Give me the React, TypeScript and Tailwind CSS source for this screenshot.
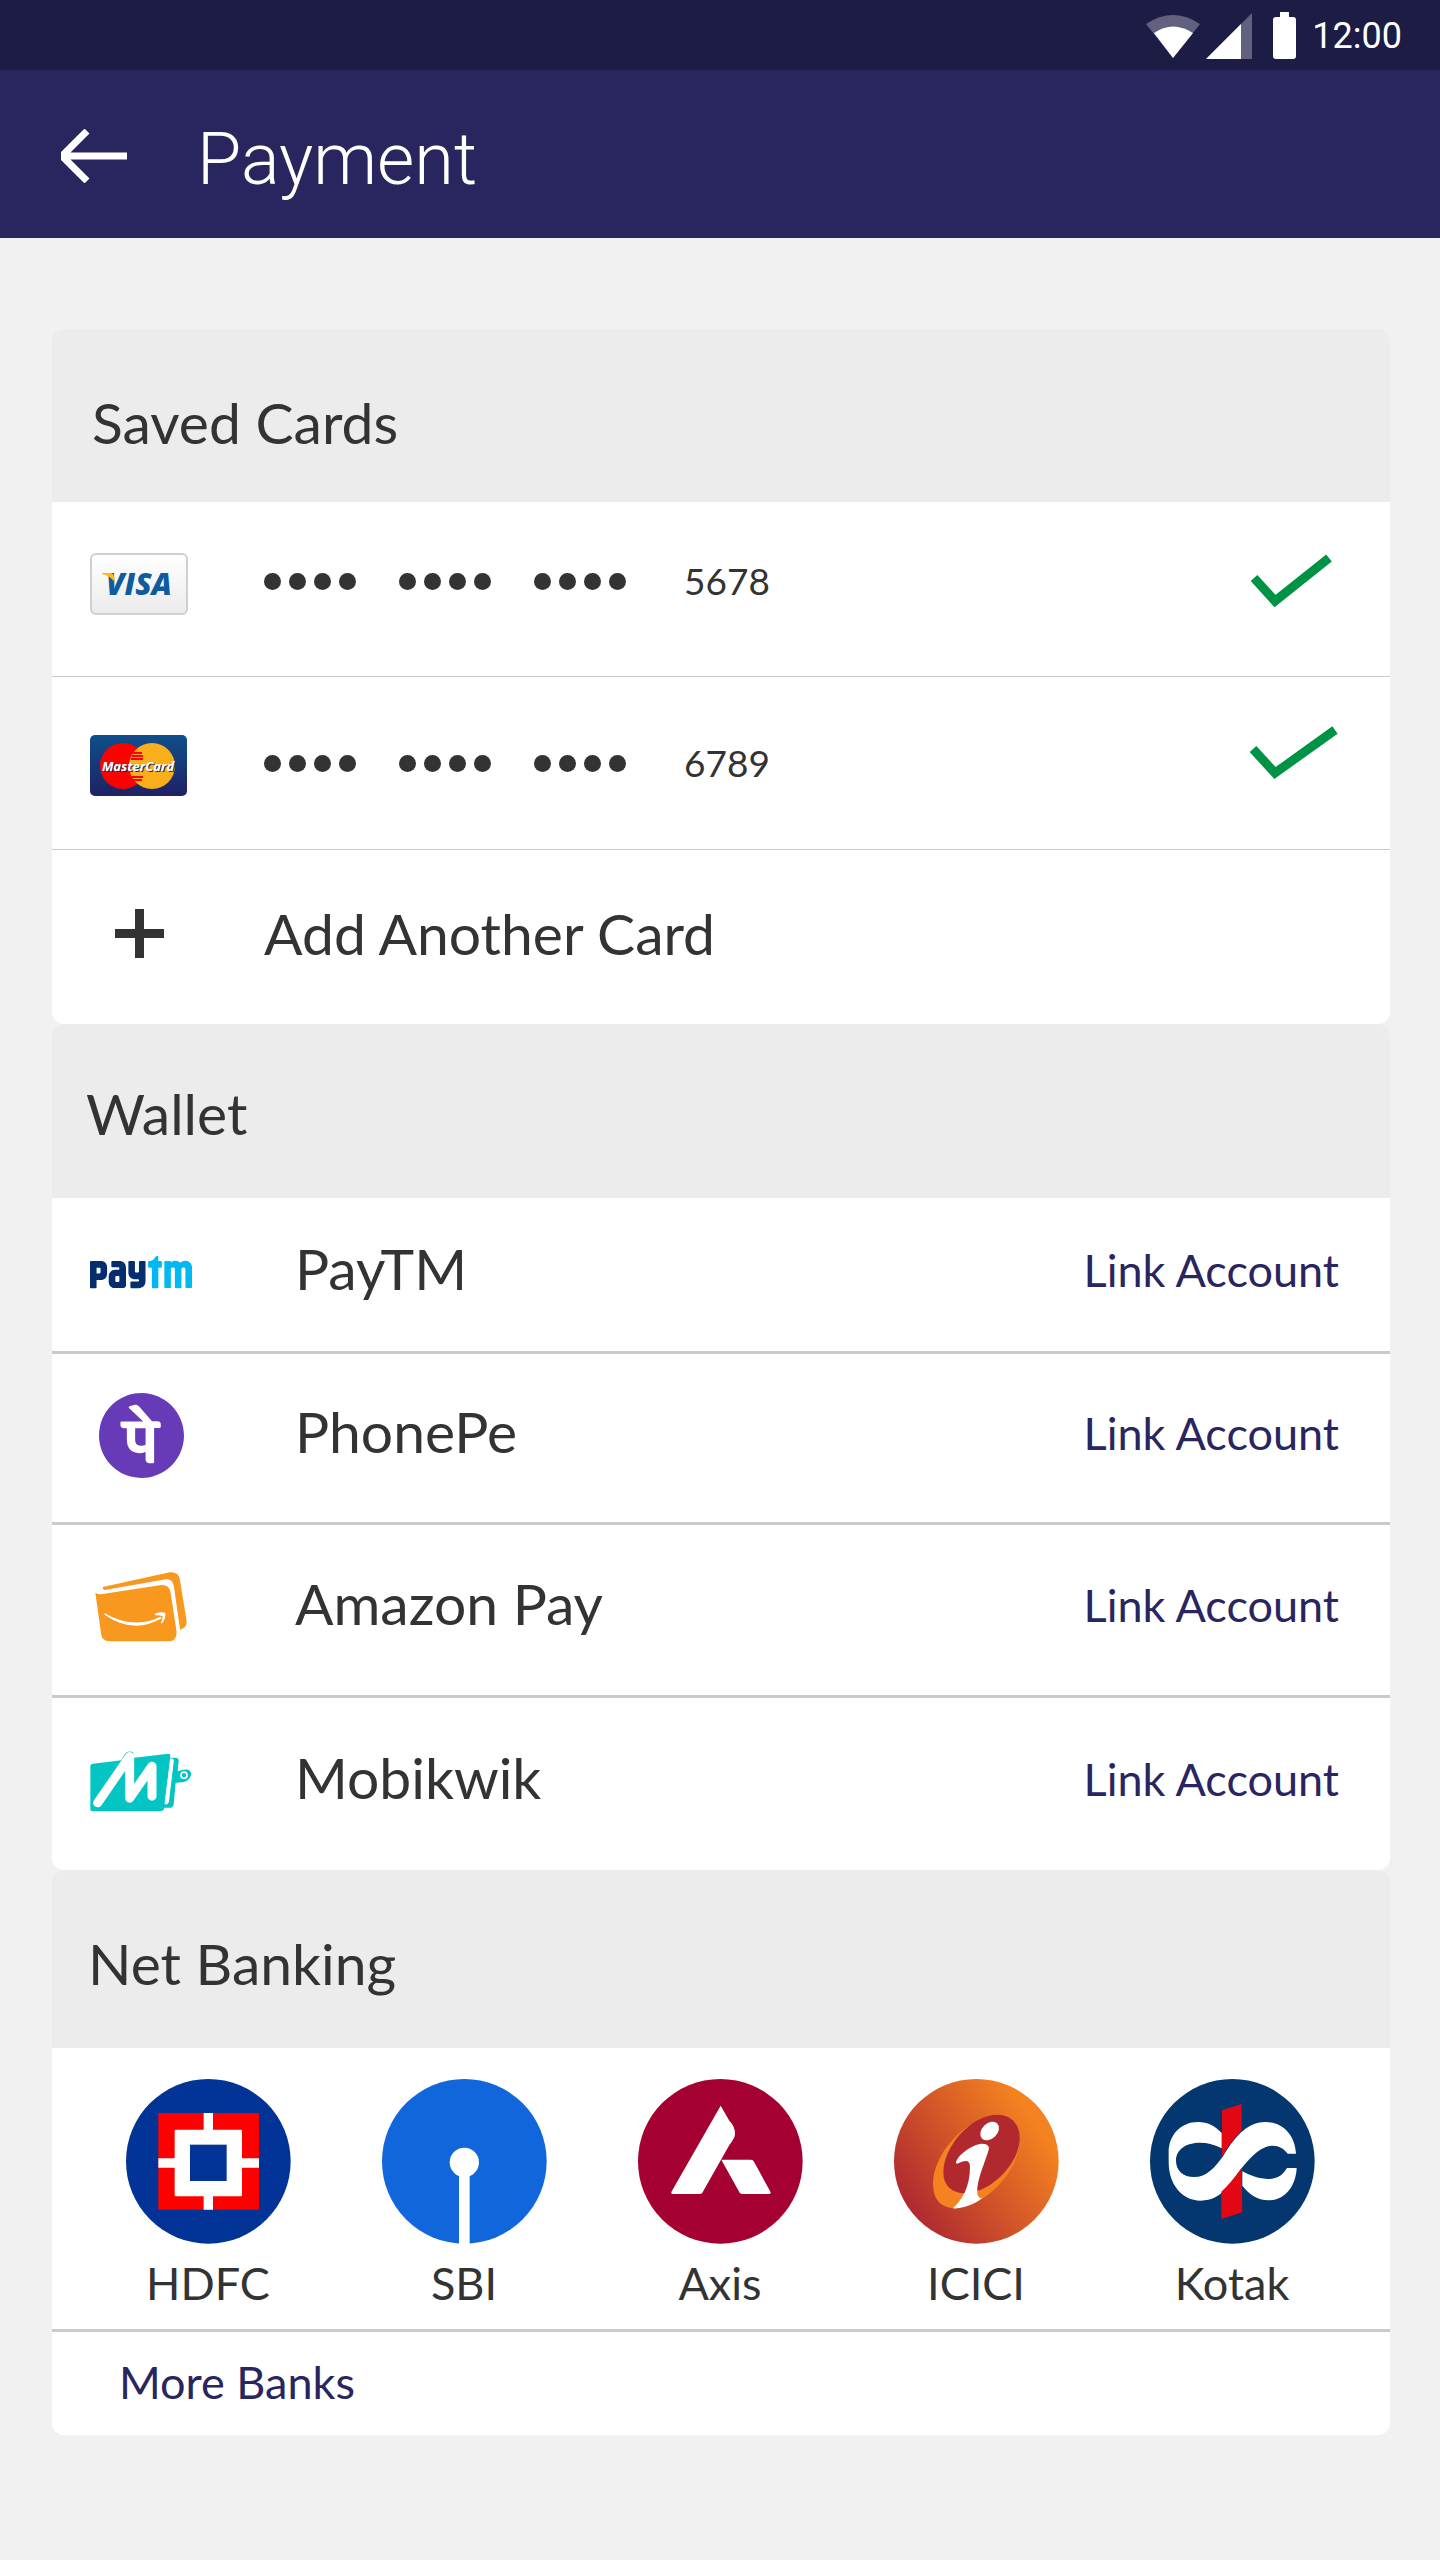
import type { ReactNode } from "react";
import { SiPaytm, SiPhonepe } from "react-icons/si";

/* ---------- Status bar icons ---------- */

function StatusIcons() {
  return (
    <svg width="150" height="48" viewBox="0 0 150 48" role="img" aria-label="Wi-Fi, signal and battery">
      <path d="M27 46 L0 12 Q27 -6 54 12Z" fill="#61607F" />
      <path d="M27 46 L8 21 Q27 8 47 21Z" fill="#fff" />
      <path d="M106 1 V47 H60Z" fill="#61607F" />
      <path d="M95 12 V47 H60Z" fill="#fff" />
      <path d="M134 0 h9 v5 h4 q3 0 3 3 v36 q0 3 -3 3 h-17 q-3 0 -3 -3 v-36 q0 -3 3 -3 h4Z" fill="#fff" />
    </svg>
  );
}

/* ---------- Card logos ---------- */

function VisaLogo() {
  return (
    <svg width="98" height="62" viewBox="0 0 98 62" role="img" aria-label="Visa">
      <defs>
        <linearGradient id="visaBg" x1="0" y1="0" x2="0" y2="1">
          <stop offset="0" stopColor="#ffffff" />
          <stop offset="1" stopColor="#ebebeb" />
        </linearGradient>
      </defs>
      <rect x="1" y="1" width="96" height="60" rx="5" fill="url(#visaBg)" stroke="#cfcfcf" strokeWidth="2" />
      <text
        x="49"
        y="42"
        textAnchor="middle"
        fontFamily="Open Sans, sans-serif"
        fontWeight="800"
        fontStyle="italic"
        fontSize="30"
        fill="#0E5C9F"
      >
        VISA
      </text>
      <path d="M12 20 H21 Q25 21 25 30 Q21 23 12 21Z" fill="#FDBB0A" />
    </svg>
  );
}

function MasterCardLogo() {
  return (
    <svg width="98" height="62" viewBox="0 0 98 62" role="img" aria-label="MasterCard">
      <defs>
        <linearGradient id="mcBg" x1="0" y1="0" x2="0" y2="1">
          <stop offset="0" stopColor="#0F4F8B" />
          <stop offset="1" stopColor="#1E2163" />
        </linearGradient>
      </defs>
      <rect width="97" height="61" rx="5" fill="url(#mcBg)" />
      <circle cx="33" cy="31" r="23" fill="#FF0000" />
      <circle cx="62" cy="31" r="23" fill="#F9AE1B" />
      <path d="M43 18h9M42 21h11M41 24h12M42 42h11M43 45h9" stroke="#FF0000" strokeWidth="2" />
      <g fontFamily="Open Sans, sans-serif" fontWeight="700" fontStyle="italic" fontSize="13" textAnchor="middle">
        <text x="49" y="37" fill="#1D2C66" aria-hidden="true">
          MasterCard
        </text>
        <text x="48" y="36" fill="#fff">
          MasterCard
        </text>
      </g>
    </svg>
  );
}

/* ---------- Wallet logos ---------- */

function PaytmLogo() {
  return (
    <>
      <svg width="0" height="0" className="absolute" aria-hidden="true">
        <defs>
          <linearGradient id="paytmFill" gradientUnits="userSpaceOnUse" x1="0" y1="0" x2="24" y2="0">
            <stop offset="0.555" stopColor="#042E6F" />
            <stop offset="0.555" stopColor="#00B9F1" />
          </linearGradient>
        </defs>
      </svg>
      <SiPaytm size={102} fill="url(#paytmFill)" aria-hidden="true" />
    </>
  );
}

function AmazonPayLogo() {
  return (
    <svg width="92" height="70" viewBox="145 572 240 210" preserveAspectRatio="none" aria-hidden="true">
      <g fill="#F8981F">
        <path d="M165 617 L340 573 Q362 571 366 592 L384 720 Q385 738 367 745 L351 616 Q348 592 330 594 L170 626 Q165 624 165 617Z" />
        <path d="M146 635 Q155 640 165 638 L318 611 Q338 610 342 632 L358 752 Q358 780 338 780 H183 Q163 780 161 758Z" />
      </g>
      <g fill="#fff">
        <path d="M170 696 Q245 746 316 706 L319 711 Q245 760 170 700Z" />
        <path d="M301 697 Q320 690 328 695 Q332 708 319 727 L317 724 Q322 710 321 704 Q312 701 302 702Z" />
      </g>
    </svg>
  );
}

function MobikwikLogo() {
  return (
    <svg width="102" height="61" viewBox="61 88 306 182" aria-hidden="true">
      <g fill="#04C4C4">
        <path d="M62 135 Q62 127 70 126 L155 115 L167 95 Q174 86 190 91 L194 108 L296 96 Q303 96 302 104 L284 256 Q283 268 272 268 H68 Q62 268 62 262Z" />
        <path d="M303 108 H318 Q327 108 327 117 L324 148 Q340 142 352 143 Q366 146 364 160 Q360 176 340 181 L318 183 L312 247 Q310 258 300 258 H276 L286 246 Q297 247 298 238 L312 120 Q312 112 303 112Z" />
      </g>
      <path d="M84 243 L180 104 V229 L247 133 V223" fill="none" stroke="#fff" strokeWidth="27" strokeLinecap="round" strokeLinejoin="round" />
      <path d="M307 115 L290 243" stroke="#fff" strokeWidth="10" strokeLinecap="round" />
      <circle cx="343" cy="160" r="9" fill="none" stroke="#fff" strokeWidth="5" />
    </svg>
  );
}

/* ---------- Bank logos ---------- */

function HdfcLogo() {
  return (
    <svg className="size-[165px]" viewBox="165 117 495 495" aria-hidden="true">
      <circle cx="412" cy="364" r="247" fill="#023397" />
      <rect x="262" y="219" width="302" height="290" fill="#f00" />
      <path d="M398 219h28v290h-28z M262 355h302v28h-302z" fill="#fff" />
      <rect x="311" y="269" width="202" height="200" rx="3" fill="#fff" />
      <rect x="357" y="314" width="110" height="109" fill="#023397" />
    </svg>
  );
}

function SbiLogo() {
  return (
    <svg className="size-[165px]" viewBox="934 115 495 495" aria-hidden="true">
      <circle cx="1181" cy="362" r="247" fill="#1166DB" />
      <circle cx="1181" cy="365" r="44" fill="#fff" />
      <path d="M1165 370h32v240h-32z" fill="#fff" />
    </svg>
  );
}

function AxisLogo() {
  return (
    <svg className="size-[165px]" viewBox="113 119 495 495" aria-hidden="true">
      <circle cx="360" cy="366" r="247" fill="#A40132" />
      <g fill="#fff">
        <path d="M361 199 L387 244 Q405 262 404 285 Q403 298 387 317 L306 460 Q304 464 298 464 H216 Q211 462 213 458Z" />
        <path d="M363 361 H452 Q458 361 461 367 L511 459 Q512 464 507 464 H425 Q420 463 418 460Z" />
      </g>
    </svg>
  );
}

function IciciLogo() {
  return (
    <svg className="size-[165px]" viewBox="882 115 495 495" aria-hidden="true">
      <defs>
        <linearGradient id="iciciBg" x1="0.1" y1="0.78" x2="0.85" y2="0.25">
          <stop offset="0" stopColor="#B02A30" />
          <stop offset="1" stopColor="#F48220" />
        </linearGradient>
      </defs>
      <circle cx="1129" cy="362" r="247" fill="url(#iciciBg)" />
      <path d="M1113 250 C1050 290 999 365 999 430 C999 475 1022 500 1060 503 C1140 503 1250 410 1259 305 L1180 300Z" fill="#F48220" />
      <path d="M1193 222 C1232 222 1259 250 1259 292 C1259 370 1170 458 1095 458 C1055 458 1030 435 1030 395 C1030 320 1110 222 1193 222Z" fill="#B1292F" />
      <path d="M1068 366 C1070 345 1118 310 1145 309 Q1166 309 1167 322 C1162 350 1132 410 1132 450 Q1130 472 1146 473 C1120 493 1085 505 1058 503 C1085 480 1110 440 1110 378 Q1110 350 1075 368 Q1069 371 1068 366Z" fill="#fff" />
      <ellipse cx="1169" cy="271" rx="32" ry="23" transform="rotate(-44 1169 271)" fill="#fff" />
    </svg>
  );
}

function KotakLogo() {
  return (
    <svg className="size-[165px]" viewBox="150 115 495 495" aria-hidden="true">
      <circle cx="397" cy="362" r="247" fill="#04376F" />
      <g fill="#fff">
        <path d="M365 277 C345 255 322 244 295 244 C240 244 206 285 206 335 V365 C206 430 245 480 302 480 C370 480 395 420 427 380 C455 345 485 315 518 315 C538 315 552 324 563 339 H588 C585 280 545 244 497 244 C435 244 400 298 370 345 C345 380 320 409 282 409 C250 409 228 390 228 360 C228 325 260 306 300 306 Q335 306 365 323Z" />
        <path d="M427 392 C450 405 480 415 505 415 C535 415 550 400 561 382 H590 C588 435 555 479 507 479 C470 479 445 458 427 435Z" />
      </g>
      <g fill="#E30613">
        <path d="M366 209 L425 190 V271 Q395 298 366 348Z" />
        <path d="M425 382 L427 515 L364 535 V453 Q390 430 425 382Z" />
      </g>
    </svg>
  );
}

/* ---------- Building blocks ---------- */

function SectionHeading({ className, children }: { className: string; children: ReactNode }) {
  return (
    <h2 className={`flex items-center rounded-t-xl bg-[#ececec] text-[57px] leading-[68px] ${className}`}>{children}</h2>
  );
}

function MaskedDigits() {
  return (
    <span className="flex w-[420px] gap-[43px]" aria-label="hidden digits">
      {[0, 1, 2].map((group) => (
        <span key={group} className="flex gap-2">
          {[0, 1, 2, 3].map((dot) => (
            <span key={dot} className="size-[17px] rounded-full bg-[#333333]" />
          ))}
        </span>
      ))}
    </span>
  );
}

function CheckMark({ points, className }: { points: string; className: string }) {
  return (
    <span className={`ml-auto ${className}`}>
      <svg width="88" height="54" viewBox="0 0 88 54" role="img" aria-label="Selected">
        <polyline points={points} fill="none" stroke="#009245" strokeWidth="9" />
      </svg>
    </span>
  );
}

const savedCards = [
  { digits: "5678", logo: <VisaLogo />, row: "min-h-[175px] pb-4", check: "4,24 25,47 79,4", checkClass: "pb-0" },
  { digits: "6789", logo: <MasterCardLogo />, row: "min-h-[173px]", check: "3,23 25,47 85,4", checkClass: "pb-5" },
];

const wallets = [
  { name: "PayTM", logo: <PaytmLogo />, height: "min-h-[156px]" },
  { name: "PhonePe", logo: <SiPhonepe size={85} color="#673AB7" aria-hidden="true" />, height: "min-h-[171px]" },
  { name: "Amazon Pay", logo: <AmazonPayLogo />, height: "min-h-[173px]" },
  { name: "Mobikwik", logo: <MobikwikLogo />, height: "min-h-[172px]" },
];

const banks = [
  { name: "HDFC", logo: <HdfcLogo /> },
  { name: "SBI", logo: <SbiLogo /> },
  { name: "Axis", logo: <AxisLogo /> },
  { name: "ICICI", logo: <IciciLogo /> },
  { name: "Kotak", logo: <KotakLogo /> },
];

export default function App() {
  return (
    <div className="min-h-screen bg-[#f1f1f1] font-[Lato,sans-serif] text-[#333333]">
      <div className="flex h-[70px] items-center justify-end gap-4 bg-[#1c1c45] pt-[2px] pr-[38px] font-[Roboto,sans-serif] text-[36px] text-white">
        <StatusIcons />
        <span>12:00</span>
      </div>
      <header className="flex h-[168px] items-center gap-[70px] bg-[#29255f] pt-[3px] pl-[61px] text-white">
        <button type="button" aria-label="Back">
          <svg width="66" height="54" viewBox="0 0 66 54" fill="none" stroke="#fff" strokeWidth="7" aria-hidden="true">
            <path d="M66 27 H5 M26 2 L3 25 V29 L26 52" />
          </svg>
        </button>
        <h1 className="pt-2 font-[Roboto,sans-serif] text-[72px] leading-[84px] font-light">Payment</h1>
      </header>

      <main className="pt-[91px] pr-[50px] pb-[125px] pl-[52px]">
        <section>
          <SectionHeading className="min-h-[173px] pt-3 pl-10">Saved Cards</SectionHeading>
          <ul className="rounded-b-xl bg-white text-[37px]">
            {savedCards.map((card) => (
              <li
                key={card.digits}
                className={`flex items-center gap-19 border-b border-[#cacaca] pr-[52px] pl-[38px] ${card.row}`}
              >
                <span className="pt-[6px]">{card.logo}</span>
                <div className="flex items-center">
                  <MaskedDigits />
                  <span>{card.digits}</span>
                </div>
                <CheckMark points={card.check} className={card.checkClass} />
              </li>
            ))}
            <li>
              <button type="button" className="flex min-h-[174px] w-full items-center gap-19 pb-2 pl-[38px] text-[57px] leading-[68px]">
                <span className="flex w-[98px] justify-center">
                  <svg width="49" height="49" viewBox="0 0 49 49" aria-hidden="true">
                    <path d="M20 0h9v20h20v9h-20v20h-9v-20h-20v-9h20z" fill="#333333" />
                  </svg>
                </span>
                Add Another Card
              </button>
            </li>
          </ul>
        </section>

        <section>
          <SectionHeading className="min-h-[174px] pt-1 pl-[34px]">Wallet</SectionHeading>
          <ul className="divide-y-3 divide-[#cacaca] rounded-b-xl bg-white">
            {wallets.map((wallet) => (
              <li key={wallet.name} className={`flex items-center gap-[103px] pr-[51px] pb-[6px] pl-[38px] ${wallet.height}`}>
                <span className="flex w-[102px] justify-center">{wallet.logo}</span>
                <span className="pb-2 text-[57px] leading-[68px]">{wallet.name}</span>
                <button
                  type="button"
                  className="ml-auto pb-1 text-[45px] leading-[54px] text-[#29255f]"
                  aria-label={`Link Account ${wallet.name}`}
                >
                  Link Account
                </button>
              </li>
            ))}
          </ul>
        </section>

        <section>
          <SectionHeading className="min-h-[178px] pt-2 pl-9">Net Banking</SectionHeading>
          <div className="rounded-b-xl bg-white">
            <ul className="grid grid-cols-5 border-b-3 border-[#cacaca] pt-[31px] pr-[30px] pb-[19px] pl-7">
              {banks.map((bank) => (
                <li key={bank.name}>
                  <button type="button" className="flex w-full flex-col items-center gap-3 text-[45px] leading-[54px]">
                    {bank.logo}
                    {bank.name}
                  </button>
                </li>
              ))}
            </ul>
            <a href="#more-banks" className="flex min-h-[103px] items-center pb-1 pl-[67px] text-[45px] leading-[54px] text-[#29255f]">
              More Banks
            </a>
          </div>
        </section>
      </main>
    </div>
  );
}
